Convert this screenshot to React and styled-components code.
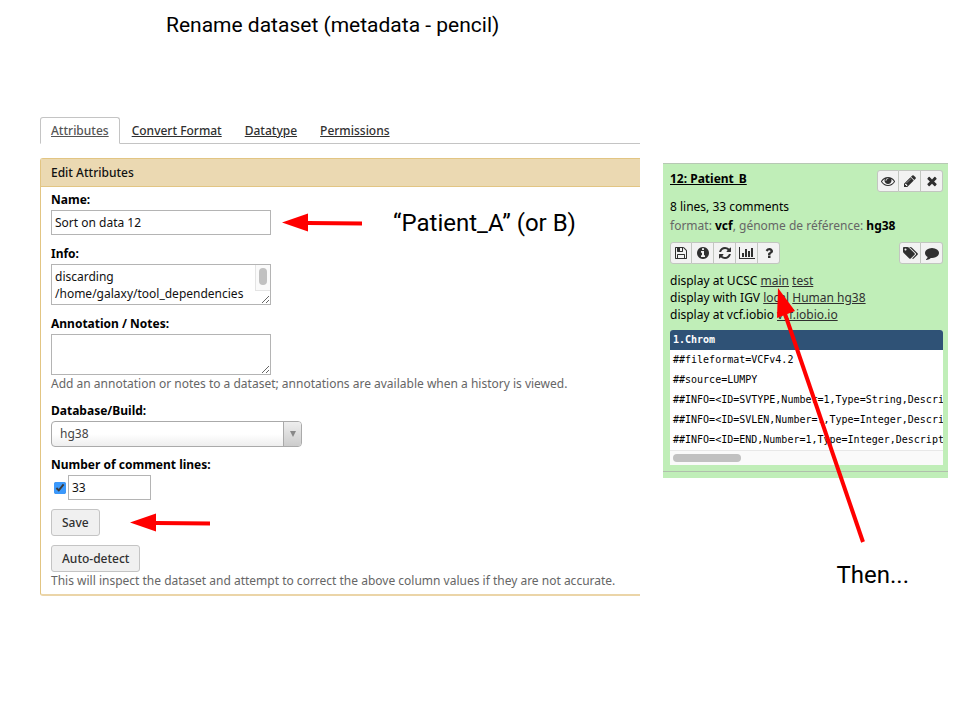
import React from "react";
import styled, { createGlobalStyle, css } from "styled-components";

const GlobalStyle = createGlobalStyle`
  *, *::before, *::after { box-sizing: border-box; }
  body {
    margin: 0;
    background: #fff;
    color: #111;
    font: 12px/18px "Noto Sans", "Open Sans", sans-serif;
  }
  input, textarea, select, button { font: inherit; color: inherit; margin: 0; }
`;

const Slide = styled.main`
  padding: 0 12px 40px 40px;
`;

const SlideTitle = styled.h1`
  margin: 0;
  padding: 8px 0 0 126px;
  font: 400 21px/34px Roboto, sans-serif;
  color: #000;
`;

const Columns = styled.div`
  display: grid;
  grid-template-columns: minmax(0, 600fr) minmax(0, 285fr);
  column-gap: 23px;
  align-items: start;
  padding-top: 75px;
`;

const Caption = styled.p`
  margin: 0;
  font: 400 24px/32px Roboto, sans-serif;
  color: #000;
`;

/* Attribute editor */

const Tabs = styled.nav`
  display: flex;
  border-bottom: 1px solid #c4c4c4;
  margin-bottom: 14px;
`;

const Tab = styled.a`
  padding: 4px 10px 3px;
  margin: 0 1px -1px 0;
  border: 1px solid transparent;
  border-radius: 3px 3px 0 0;
  color: #303030;
  font-weight: 500;
  text-decoration: underline;
  ${(p) =>
    p.$active &&
    css`
      background: #fff;
      border-color: #c4c4c4;
      border-bottom-color: #fff;
      color: #555;
    `}
`;

const FormPanel = styled.section`
  border: solid #e2c583;
  border-width: 1px 0 2px 1px;
  border-bottom-color: #ebd5a8;
  border-radius: 3px 0 0 3px;
`;

const FormTitle = styled.h2`
  margin: 0;
  padding: 5px 10px 4px;
  background: #ebd9b2;
  border-bottom: 1px solid #e2c583;
  font-size: 12px;
  font-weight: 500;
`;

const FormBody = styled.form`
  padding: 4px 10px;
`;

const Field = styled.div`
  margin-bottom: ${(p) => (p.$tight ? 9 : 10)}px;
`;

const Label = styled.label`
  display: block;
  margin-bottom: 1px;
  font-weight: 700;
  color: #000;
`;

const Help = styled.p`
  margin: 0;
  color: #666;
  white-space: nowrap;
`;

const Row = styled.div`
  display: flex;
  align-items: center;
  height: ${(p) => p.$height}px;
`;

const TextInput = styled.input`
  width: ${(p) => p.$width}px;
  height: 25px;
  padding: 0 3px;
  border: 1px solid #b4b4b4;
  background: #fff;
`;

const TextAreaBox = styled.div`
  position: relative;
  width: 220px;
`;

const TextArea = styled.textarea`
  display: block;
  width: 100%;
  height: 41px;
  padding: 3px;
  border: 1px solid #b4b4b4;
  line-height: 17px;
  resize: vertical;
`;

const ScrollTrack = styled.span`
  position: absolute;
  top: 1px;
  right: 1px;
  width: 15px;
  height: 26px;
  padding: 3px;
  border: solid #e4e4e4;
  border-width: 0 0 1px 1px;
  background: #fafafa;
  pointer-events: none;
`;

const ScrollThumb = styled.span`
  display: block;
  width: ${(p) => p.$width}px;
  height: ${(p) => p.$height}px;
  border-radius: 4px;
  background: #c1c1c1;
`;

const SelectBox = styled.div`
  position: relative;
  width: 251px;
  height: 26px;
`;

const Select = styled.select`
  appearance: none;
  width: 100%;
  height: 100%;
  padding: 0 28px 0 8px;
  border: 1px solid #aaa;
  border-radius: 4px;
  background: linear-gradient(#fff 50%, #eee);
  color: #444;
`;

const SelectArrow = styled.span`
  position: absolute;
  inset: 1px 1px 1px auto;
  width: 18px;
  display: grid;
  place-items: center;
  border-left: 1px solid #aaa;
  border-radius: 0 3px 3px 0;
  background: linear-gradient(#eee, #ccc);
  pointer-events: none;
`;

const Checkbox = styled.input`
  width: 12px;
  height: 12px;
  margin: 0 2px 0 3px;
  accent-color: #3b99fc;
`;

const Button = styled.button`
  height: 27px;
  padding: 0 10px;
  border: 1px solid #c4c4c4;
  border-radius: 3px;
  background: #f0f0f0;
  color: #303030;
  font-weight: 500;
`;

const SideArrow = styled.svg`
  display: block;
  flex: none;
  width: 80px;
  height: 20px;
  margin-left: ${(p) => p.$gap}px;
`;

const NameCaption = styled(Caption)`
  margin-left: 31px;
  white-space: nowrap;
`;

/* History item */

const HistoryColumn = styled.div`
  position: relative;
  padding-top: 46px;
`;

const HistoryItem = styled.article`
  border-top: 1px solid #b7c8b4;
  background: #c0eeb8;
  padding: 6px 5px 6px 7px;
  color: #000;
`;

const HistoryFooter = styled.div`
  height: 7px;
  border-top: 1px solid #b0bfac;
  background: #c0eeb8;
`;

const Bar = styled.div`
  display: flex;
  justify-content: space-between;
  align-items: flex-start;
  margin-bottom: 5px;
`;

const ToolBar = styled(Bar)`
  margin: 7px 0 8px;
`;

const DatasetTitle = styled.a`
  color: #000;
  font-weight: 700;
  text-decoration: underline;
`;

const Group = styled.div`
  display: flex;
`;

const IconButton = styled.button`
  display: grid;
  place-items: center;
  width: 22px;
  height: 22px;
  padding: 0;
  border: 1px solid #c2c6c0;
  background: #f2f2f2;
  color: #303030;
  & + & { border-left: 0; }
  &:first-child { border-radius: 3px 0 0 3px; }
  &:last-child { border-radius: 0 3px 3px 0; }
`;

const Glyph = styled.svg`
  display: block;
  height: 14px;
  width: auto;
  fill: currentColor;
`;

const Line = styled.p`
  margin: 0;
  line-height: ${(p) => p.$leading}px;
  white-space: nowrap;
`;

const Muted = styled.span`
  color: #666;
`;

const DisplayLinks = styled.div`
  margin-bottom: 7px;
  a { color: #303030; }
`;

const Peek = styled.div`
  overflow: hidden;
  background: #fff;
  border-radius: 3px 3px 0 0;
`;

const PeekTable = styled.table`
  width: 100%;
  border-collapse: collapse;
  font: 10px/20px "DejaVu Sans Mono", monospace;
  th, td { padding: 0 3px; text-align: left; white-space: nowrap; }
  th { background: #2f5276; color: #fff; }
`;

const PeekTrack = styled.div`
  height: 15px;
  padding: 3px;
  border-top: 1px solid #e8e8e8;
  background: #fafafa;
`;

const PointerArrow = styled.svg`
  position: absolute;
  top: 168px;
  left: 106px;
  width: 100px;
  height: 262px;
  pointer-events: none;
`;

const ThenCaption = styled(Caption)`
  padding: 81px 39px 0 0;
  text-align: right;
`;

const ICONS = {
  eye: [1792, "M1664 960q-152-236-381-353 61 104 61 225 0 185-131.5 316.5t-316.5 131.5-316.5-131.5-131.5-316.5q0-121 61-225-229 117-381 353 133 205 333.5 326.5t434.5 121.5 434.5-121.5 333.5-326.5zm-720-384q0-20-14-34t-34-14q-125 0-214.5 89.5t-89.5 214.5q0 20 14 34t34 14 34-14 14-34q0-86 61-147t147-61q20 0 34-14t14-34zm848 384q0 34-20 69-140 230-376.5 368.5t-499.5 138.5-499.5-139-376.5-368q-20-35-20-69t20-69q140-229 376.5-368t499.5-139 499.5 139 376.5 368q20 35 20 69z"],
  pencil: [1792, "M491 1536l91-91-235-235-91 91v107h128v128h107zm523-928q0-22-22-22-10 0-17 7l-542 542q-7 7-7 17 0 22 22 22 10 0 17-7l542-542q7-7 7-17zm-54-192l416 416-832 832h-416v-416zm683 96q0 53-37 90l-166 166-416-416 166-165q36-38 90-38 53 0 91 38l235 234q37 39 37 91z"],
  times: [1792, "M1490 1322q0 40-28 68l-136 136q-28 28-68 28t-68-28l-294-294-294 294q-28 28-68 28t-68-28l-136-136q-28-28-28-68t28-68l294-294-294-294q-28-28-28-68t28-68l136-136q28-28 68-28t68 28l294 294 294-294q28-28 68-28t68 28l136 136q28 28 28 68t-28 68l-294 294 294 294q28 28 28 68z"],
  save: [1792, "M512 1536h768v-384h-768v384zm896 0h128v-896q0-14-10-38.5t-20-34.5l-281-281q-10-10-34-20t-39-10v416q0 40-28 68t-68 28h-576q-40 0-68-28t-28-68v-416h-128v1280h128v-416q0-40 28-68t68-28h832q40 0 68 28t28 68v416zm-384-928v-320q0-13-9.5-22.5t-22.5-9.5h-192q-13 0-22.5 9.5t-9.5 22.5v320q0 13 9.5 22.5t22.5 9.5h192q13 0 22.5-9.5t9.5-22.5zm640 32v928q0 40-28 68t-68 28h-1344q-40 0-68-28t-28-68v-1344q0-40 28-68t68-28h928q40 0 88 20t76 48l280 280q28 28 48 76t20 88z"],
  info: [1792, "M1152 1376v-160q0-14-9-23t-23-9h-96v-512q0-14-9-23t-23-9h-320q-14 0-23 9t-9 23v160q0 14 9 23t23 9h96v320h-96q-14 0-23 9t-9 23v160q0 14 9 23t23 9h448q14 0 23-9t9-23zm-128-896v-160q0-14-9-23t-23-9h-192q-14 0-23 9t-9 23v160q0 14 9 23t23 9h192q14 0 23-9t9-23zm640 416q0 209-103 385.5t-279.5 279.5-385.5 103-385.5-103-279.5-279.5-103-385.5 103-385.5 279.5-279.5 385.5-103 385.5 103 279.5 279.5 103 385.5z"],
  refresh: [1792, "M1639 1056q0 5-1 7-64 268-268 434.5t-478 166.5q-146 0-282.5-55t-243.5-157l-129 129q-19 19-45 19t-45-19-19-45v-448q0-26 19-45t45-19h448q26 0 45 19t19 45-19 45l-137 137q71 66 161 102t187 36q134 0 250-65t186-179q11-17 53-117 8-23 30-23h192q13 0 22.5 9.5t9.5 22.5zm25-800v448q0 26-19 45t-45 19h-448q-26 0-45-19t-19-45 19-45l138-138q-148-137-349-137-134 0-250 65t-186 179q-11 17-53 117-8 23-30 23h-199q-13 0-22.5-9.5t-9.5-22.5v-7q65-268 270-434.5t480-166.5q146 0 284 55.5t245 156.5l130-129q19-19 45-19t45 19 19 45z"],
  chart: [2048, "M640 896v512h-256v-512h256zm384-512v1024h-256v-1024h256zm1024 1152v128h-2048v-1536h128v1408h1920zm-640-896v768h-256v-768h256zm384-384v1152h-256v-1152h256z"],
  question: [1792, "M1088 1256v240q0 16-12 28t-28 12h-240q-16 0-28-12t-12-28v-240q0-16 12-28t28-12h240q16 0 28 12t12 28zm316-600q0 54-15.5 101t-35 76.5-55 59.5-57.5 43.5-61 35.5q-41 23-68.5 65t-27.5 67q0 17-12 32.5t-28 15.5h-240q-15 0-25.5-18.5t-10.5-37.5v-45q0-83 65-156.5t143-108.5q59-27 84-56t25-76q0-42-46.5-74t-107.5-32q-65 0-108 29-35 25-107 115-13 16-31 16-12 0-25-8l-164-125q-13-10-15.5-25t5.5-28q160-266 464-266 80 0 161 31t146 83 106 127.5 41 158.5z"],
  tags: [2048, "M576 448q0-53-37.5-90.5t-90.5-37.5-90.5 37.5-37.5 90.5 37.5 90.5 90.5 37.5 90.5-37.5 37.5-90.5zm1067 576q0 53-37 90l-491 492q-39 37-91 37-53 0-90-37l-715-716q-38-37-64.5-101t-26.5-117v-416q0-52 38-90t90-38h416q53 0 117 26.5t102 64.5l715 714q37 39 37 91zm384 0q0 53-37 90l-491 492q-39 37-91 37-36 0-59-14t-53-45l470-470q37-37 37-90 0-52-37-91l-715-714q-38-38-102-64.5t-117-26.5h224q53 0 117 26.5t102 64.5l715 714q37 39 37 91z"],
  comment: [1792, "M1792 896q0 174-120 321.5t-326 233-450 85.5q-70 0-145-8-198 175-460 242-49 14-114 22-17 2-30.5-9t-17.5-29v-1q-3-4-.5-12t2-10 4.5-9.5l6-9 7-8.5 8-9q7-8 31-34.5t34.5-38 31-39.5 32.5-51 27-59 26-76q-157-89-247.5-220t-90.5-281q0-130 71-248.5t191-204.5 286-136.5 348-50.5 348 50.5 286 136.5 191 204.5 71 248.5z"],
};

function IconGroup({ items }) {
  return (
    <Group>
      {items.map(([name, label]) => (
        <IconButton key={name} type="button" aria-label={label}>
          <Glyph viewBox={`0 0 ${ICONS[name][0]} 1792`} aria-hidden="true">
            <path d={ICONS[name][1]} />
          </Glyph>
        </IconButton>
      ))}
    </Group>
  );
}

function LeftArrow({ gap }) {
  return (
    <SideArrow $gap={gap} viewBox="0 0 80 20" aria-hidden="true">
      <path d="M0 9.500L26 .5v7.500L80 8.500v4L26 12v6.500z" fill="#f00" />
    </SideArrow>
  );
}

const PEEK_ROWS = [
  "##fileformat=VCFv4.2",
  "##source=LUMPY",
  "##INFO=<ID=SVTYPE,Number=1,Type=String,Descrip",
  "##INFO=<ID=SVLEN,Number=.,Type=Integer,Descrip",
  "##INFO=<ID=END,Number=1,Type=Integer,Descript",
];

function AttributeEditor() {
  return (
    <div>
      <Tabs>
        <Tab href="#attributes" $active>Attributes</Tab>
        <Tab href="#convert">Convert Format</Tab>
        <Tab href="#datatype">Datatype</Tab>
        <Tab href="#permissions">Permissions</Tab>
      </Tabs>
      <FormPanel>
        <FormTitle>Edit Attributes</FormTitle>
        <FormBody onSubmit={(e) => e.preventDefault()}>
          <Field>
            <Label htmlFor="name">Name:</Label>
            <Row $height={25}>
              <TextInput id="name" $width={220} defaultValue="Sort on data 12" />
              <LeftArrow gap={11} />
              <NameCaption>“Patient_A” (or B)</NameCaption>
            </Row>
          </Field>
          <Field>
            <Label htmlFor="info">Info:</Label>
            <TextAreaBox>
              <TextArea id="info" defaultValue={"discarding\n/home/galaxy/tool_dependencies"} />
              <ScrollTrack>
                <ScrollThumb $width={8} $height={17} />
              </ScrollTrack>
            </TextAreaBox>
          </Field>
          <Field $tight>
            <Label htmlFor="notes">Annotation / Notes:</Label>
            <TextAreaBox>
              <TextArea id="notes" />
            </TextAreaBox>
            <Help>Add an annotation or notes to a dataset; annotations are available when a history is viewed.</Help>
          </Field>
          <Field $tight>
            <Label htmlFor="build">Database/Build:</Label>
            <SelectBox>
              <Select id="build" defaultValue="hg38">
                <option value="hg38">hg38</option>
              </Select>
              <SelectArrow>
                <svg width="6" height="6" viewBox="0 0 6 6" aria-hidden="true">
                  <path d="M0 0h6L3 6z" fill="#888" />
                </svg>
              </SelectArrow>
            </SelectBox>
          </Field>
          <Field $tight>
            <Label htmlFor="comments">Number of comment lines:</Label>
            <Row $height={25}>
              <Checkbox type="checkbox" defaultChecked aria-label="Set number of comment lines" />
              <TextInput id="comments" $width={83} defaultValue="33" />
            </Row>
          </Field>
          <Field $tight>
            <Row $height={27}>
              <Button type="submit">Save</Button>
              <LeftArrow gap={30} />
            </Row>
          </Field>
          <Button type="button">Auto-detect</Button>
          <Help>This will inspect the dataset and attempt to correct the above column values if they are not accurate.</Help>
        </FormBody>
      </FormPanel>
    </div>
  );
}

function History() {
  return (
    <HistoryColumn>
      <HistoryItem>
        <Bar>
          <DatasetTitle href="#dataset">12: Patient_B</DatasetTitle>
          <IconGroup items={[["eye", "View data"], ["pencil", "Edit attributes"], ["times", "Delete"]]} />
        </Bar>
        <Line $leading={19}>8 lines, 33 comments</Line>
        <Line $leading={19}>
          <Muted>format: </Muted><b>vcf</b><Muted>, génome de référence: </Muted><b>hg38</b>
        </Line>
        <ToolBar>
          <IconGroup
            items={[
              ["save", "Download"],
              ["info", "View details"],
              ["refresh", "Run again"],
              ["chart", "Visualize"],
              ["question", "Help"],
            ]}
          />
          <IconGroup items={[["tags", "Edit tags"], ["comment", "Edit annotation"]]} />
        </ToolBar>
        <DisplayLinks>
          <Line $leading={17}>display at UCSC <a href="#main">main</a> <a href="#test">test</a></Line>
          <Line $leading={17}>display with IGV <a href="#local">local</a> <a href="#human">Human hg38</a></Line>
          <Line $leading={17}>display at vcf.iobio <a href="#iobio">vcf.iobio.io</a></Line>
        </DisplayLinks>
        <Peek>
          <PeekTable>
            <thead>
              <tr><th scope="col">1.Chrom</th></tr>
            </thead>
            <tbody>
              {PEEK_ROWS.map((text) => (
                <tr key={text}><td>{text}</td></tr>
              ))}
            </tbody>
          </PeekTable>
          <PeekTrack>
            <ScrollThumb $width={68} $height={8} />
          </PeekTrack>
        </Peek>
      </HistoryItem>
      <HistoryFooter />
      <ThenCaption>Then...</ThenCaption>
      <PointerArrow viewBox="0 0 100 262" aria-hidden="true">
        <path d="M15 26L94 257" stroke="#f00" strokeWidth="4" />
        <path d="M9 3L26 26L8 33z" fill="#f00" />
      </PointerArrow>
    </HistoryColumn>
  );
}

export default function App() {
  return (
    <>
      <GlobalStyle />
      <Slide>
        <SlideTitle>Rename dataset (metadata - pencil)</SlideTitle>
        <Columns>
          <AttributeEditor />
          <History />
        </Columns>
      </Slide>
    </>
  );
}
